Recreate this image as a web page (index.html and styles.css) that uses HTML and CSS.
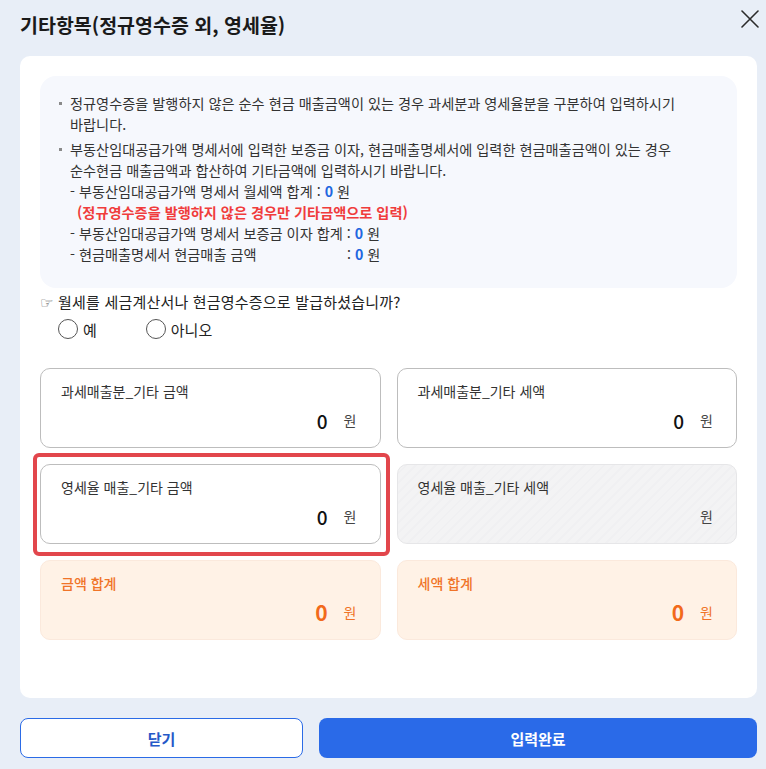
FILE: index.html
```html
<!DOCTYPE html>
<html lang="ko">
<head>
<meta charset="utf-8">
<title>기타항목</title>
<link rel="stylesheet" href="styles.css">
</head>
<body>
<div class="page">
  <header class="head">
    <h1 class="title">기타항목(정규영수증 외, 영세율)</h1>
    <button class="close" aria-label="닫기">
      <svg width="18" height="18" viewBox="0 0 18 18"><path d="M1 1 L17 17 M17 1 L1 17" stroke="#2b2b2b" stroke-width="1.6" fill="none" stroke-linecap="round"/></svg>
    </button>
  </header>

  <main class="card">
    <section class="notice">
      <ul class="notice-list">
        <li>정규영수증을 발행하지 않은 순수 현금 매출금액이 있는 경우 과세분과 영세율분을 구분하여 입력하시기<br>바랍니다.</li>
        <li>
          <div>부동산임대공급가액 명세서에 입력한 보증금 이자, 현금매출명세서에 입력한 현금매출금액이 있는 경우<br>순수현금 매출금액과 합산하여 기타금액에 입력하시기 바랍니다.</div>
          <div class="sub">- 부동산임대공급가액 명세서 월세액 합계 : <b class="num">0</b> 원</div>
          <div class="sub warn">(정규영수증을 발행하지 않은 경우만 기타금액으로 입력)</div>
          <div class="sub">- 부동산임대공급가액 명세서 보증금 이자 합계 : <b class="num">0</b> 원</div>
          <div class="sub"><span class="pad-label">- 현금매출명세서 현금매출 금액</span>: <b class="num">0</b> 원</div>
        </li>
      </ul>
    </section>

    <p class="question"><span class="hand">☞</span> 월세를 세금계산서나 현금영수증으로 발급하셨습니까?</p>
    <div class="radios">
      <label class="radio"><span class="circle"></span>예</label>
      <label class="radio"><span class="circle"></span>아니오</label>
    </div>

    <div class="fields">
      <div class="field">
        <div class="f-label">과세매출분_기타 금액</div>
        <div class="f-value"><span class="amt">0</span><span class="unit">원</span></div>
      </div>
      <div class="field">
        <div class="f-label">과세매출분_기타 세액</div>
        <div class="f-value"><span class="amt">0</span><span class="unit">원</span></div>
      </div>
      <div class="field highlight">
        <div class="f-label">영세율 매출_기타 금액</div>
        <div class="f-value"><span class="amt">0</span><span class="unit">원</span></div>
      </div>
      <div class="field disabled">
        <div class="f-label">영세율 매출_기타 세액</div>
        <div class="f-value"><span class="unit">원</span></div>
      </div>
      <div class="field total">
        <div class="f-label">금액 합계</div>
        <div class="f-value"><span class="amt">0</span><span class="unit">원</span></div>
      </div>
      <div class="field total">
        <div class="f-label">세액 합계</div>
        <div class="f-value"><span class="amt">0</span><span class="unit">원</span></div>
      </div>
    </div>
  </main>

  <footer class="actions">
    <button class="btn btn-outline">닫기</button>
    <button class="btn btn-primary">입력완료</button>
  </footer>
</div>
</body>
</html>
```

FILE: styles.css
```css
* { box-sizing: border-box; }

html, body {
  margin: 0;
  padding: 0;
  background: #e8eef7;
}

body {
  font-family: "Noto Sans CJK KR", "Noto Sans", sans-serif;
  color: #333;
  font-size: 14px;
  letter-spacing: 0;
}

.page {
  padding: 0 9px 0 20px;
}

.head {
  height: 50px;
  margin-bottom: 6px;
  display: flex;
  align-items: center;
  justify-content: space-between;
}

.title {
  margin: 0;
  font-size: 19.5px;
  font-weight: 700;
  color: #1a1a1a;
  line-height: 26px;
}

.close {
  align-self: flex-start;
  margin: 10px -2px 0 0;
  padding: 0;
  border: 0;
  background: none;
  width: 18px;
  height: 18px;
  display: flex;
}

.card {
  background: #fff;
  border-radius: 10px;
  height: 642px;
  padding: 20px 20px 0 20px;
}

.notice {
  background: #f6f8fd;
  border-radius: 16px;
  height: 212px;
  padding: 17px 12px 0 19px;
}

.notice-list {
  list-style: none;
  margin: 0;
  padding: 0;
  font-size: 14.2px;
  line-height: 21px;
  color: #333;
}

.notice-list li {
  display: grid;
  grid-template-columns: 11px 1fr;
  margin-bottom: 4px;
}

.notice-list li::before {
  content: "";
  width: 3px;
  height: 3px;
  background: #8a8a8a;
  margin-top: 9px;
}

.notice-list li > * { grid-column: 2; }

.sub { white-space: nowrap; }

.warn {
  color: #f03c3c;
  font-weight: 700;
  padding-left: 7px;
}

.num {
  color: #2166e0;
  font-weight: 700;
}

.pad-label {
  display: inline-block;
  width: 277px;
}

.question {
  margin: 4px 0 0;
  font-size: 15px;
  line-height: 20px;
  color: #222;
  letter-spacing: 0.2px;
}

.hand {
  font-family: "DejaVu Sans", sans-serif;
  font-size: 15px;
  color: #555;
}

.radios {
  display: flex;
  gap: 49px;
  margin: 5px 0 0 18px;
  height: 22px;
  align-items: center;
}

.radio {
  display: flex;
  align-items: center;
  gap: 5px;
  font-size: 15px;
  color: #222;
}

.circle {
  width: 20px;
  height: 20px;
  border: 1px solid #555;
  border-radius: 50%;
  background: #fff;
}

.fields {
  margin-top: 28px;
  display: grid;
  grid-template-columns: 1fr 1fr;
  grid-auto-rows: 80px;
  column-gap: 16px;
  row-gap: 16px;
}

.field {
  position: relative;
  border: 1px solid #bdbdbd;
  border-radius: 10px;
  background: #fff;
  padding: 12px 23px 0 20px;
}

.f-label {
  line-height: 20px;
  font-size: 14px;
  color: #333;
}

.f-value {
  margin-top: 7px;
  display: flex;
  justify-content: flex-end;
  align-items: center;
  gap: 16px;
  height: 24px;
}

.amt {
  font-size: 19px;
  font-weight: 500;
  color: #111;
}

.unit {
  font-size: 14px;
  color: #444;
}

.highlight::after {
  content: "";
  position: absolute;
  top: -12px;
  left: -8px;
  right: -10px;
  bottom: -13px;
  border: 4px solid #e2464c;
  border-radius: 6px;
  pointer-events: none;
}

.disabled {
  border-color: #e6e6e8;
  background: repeating-linear-gradient(135deg, #f3f3f4 0 5px, #f0f0f2 5px 7px);
}

.total {
  border-color: #fbe9dc;
  background: #fff2e6;
}

.total .f-label {
  color: #f07428;
  font-weight: 500;
}

.total .amt {
  color: #f26a1b;
  font-weight: 700;
  font-size: 21px;
}

.total .unit {
  color: #f07428;
}

.actions {
  margin-top: 20px;
  display: grid;
  grid-template-columns: 283px 1fr;
  gap: 16px;
}

.btn {
  height: 40px;
  border-radius: 8px;
  font-family: "Noto Sans CJK KR", "Noto Sans", sans-serif;
  font-size: 15px;
  font-weight: 700;
  cursor: pointer;
}

.btn-outline {
  background: #fff;
  border: 1px solid #2b6be6;
  color: #2458c8;
}

.btn-primary {
  background: #2a6ae8;
  border: 0;
  color: #fff;
}
```
